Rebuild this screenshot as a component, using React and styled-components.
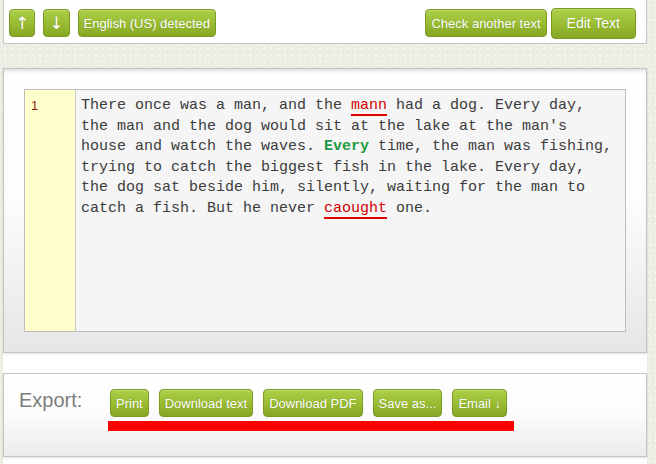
import React from "react";
import styled, { createGlobalStyle } from "styled-components";

const Global = createGlobalStyle`
  html, body { margin: 0; padding: 0; }
  body {
    background-color: #efeee6;
    background-image:
      radial-gradient(rgba(120,115,95,0.06) 1px, transparent 1px),
      radial-gradient(rgba(255,255,255,0.6) 1px, transparent 1px);
    background-size: 5px 5px, 7px 7px;
    background-position: 0 0, 2px 3px;
    font-family: "Liberation Sans", Arial, sans-serif;
    overflow: hidden;
  }
`;

const Page = styled.div`
  width: 644px;
  margin-left: 3px;
  display: flex;
  flex-direction: column;
`;

const TopBar = styled.div`
  box-sizing: border-box;
  height: 45px;
  margin-top: -1px;
  background: #fff;
  border: 1px solid #c6c6c6;
  display: flex;
  align-items: center;
  padding: 3px 10px 0 5px;
`;

const Group = styled.div`
  display: flex;
  align-items: center;
  gap: ${(p) => p.$gap}px;
`;

const Spacer = styled.div`
  flex: 1;
`;

const Button = styled.button`
  box-sizing: border-box;
  height: ${(p) => (p.$big ? 31 : 28)}px;
  padding: 0 ${(p) => (p.$big ? 15 : 5)}px;
  border: 1px solid #7c9a22;
  border-radius: 4px;
  background: linear-gradient(to bottom, #abcf47 0%, #98bb32 55%, #86a723 100%);
  color: #fff;
  font-family: ${(p) => (p.$arrow ? '"DejaVu Sans", sans-serif' : '"Liberation Sans", Arial, sans-serif')};
  font-size: ${(p) => (p.$big ? 14 : p.$arrow ? 17 : 13)}px;
  line-height: 1;
  white-space: nowrap;
  text-shadow: 0 0 1px rgba(60, 80, 0, 0.35);
  box-shadow: inset 0 1px 0 rgba(255, 255, 255, 0.25);
  cursor: pointer;
  display: flex;
  align-items: center;
  justify-content: center;
`;

const Lower = styled.div`
  background: #fff;
  margin-top: 24px;
  display: flex;
  flex-direction: column;
  gap: 20px;
  padding-bottom: 10px;
`;

const MainPanel = styled.div`
  box-sizing: border-box;
  height: 285px;
  border: 1px solid #c4c4c4;
  padding: 20px;
  background: linear-gradient(to bottom, #ffffff 0%, #fdfdfd 45%, #e6e6e6 100%);
  box-shadow: inset 0 4px 5px -3px rgba(0, 0, 0, 0.18), 0 1px 2px rgba(0, 0, 0, 0.12);
`;

const Editor = styled.div`
  box-sizing: border-box;
  height: 243px;
  border: 1px solid #bdbdbd;
  display: flex;
  background: #f5f5f5;
`;

const Gutter = styled.div`
  box-sizing: border-box;
  width: 51px;
  flex: none;
  background: #ffffcc;
  border-right: 1px solid #c8c8c8;
  padding: 6px 0 0 6px;
  font-family: "Liberation Sans", Arial, sans-serif;
  font-size: 13px;
  line-height: 20.6px;
  color: #8a1f1f;
`;

const TextArea = styled.div`
  flex: 1;
  padding: 6px 5px 0 5px;
  font-family: "Liberation Mono", "Courier New", monospace;
  font-size: 15px;
  line-height: 20.6px;
  color: #3c3c3c;
  white-space: pre;
`;

const Miss = styled.span`
  color: #d40000;
  border-bottom: 2px solid #e00000;
`;

const Style = styled.span`
  color: #1f9a42;
  font-weight: bold;
`;

const ExportPanel = styled.div`
  box-sizing: border-box;
  height: 84px;
  border: 1px solid #c4c4c4;
  background: linear-gradient(to bottom, #ffffff 0%, #fcfcfc 50%, #ebebeb 100%);
  box-shadow: 0 1px 2px rgba(0, 0, 0, 0.12);
  display: flex;
  align-items: flex-start;
  padding: 15px 0 0 15px;
`;

const ExportLabel = styled.div`
  width: 89px;
  flex: none;
  font-family: "Liberation Sans", Arial, sans-serif;
  font-size: 20px;
  line-height: 23px;
  color: #7d7d7d;
`;

const ExportCol = styled.div`
  display: flex;
  flex-direction: column;
  gap: 4px;
`;

const ExportRow = styled.div`
  display: flex;
  gap: 10px;
  padding-left: 2px;
`;

const RedBar = styled.div`
  width: 406px;
  height: 10px;
  background: #ff0000;
`;

export default function App() {
  return (
    <>
      <Global />
      <Page>
        <TopBar>
          <Group $gap={8}>
            <Button $arrow>↑</Button>
            <Button $arrow>↓</Button>
            <Button>English (US) detected</Button>
          </Group>
          <Spacer />
          <Group $gap={4}>
            <Button>Check another text</Button>
            <Button $big>Edit Text</Button>
          </Group>
        </TopBar>
        <Lower>
          <MainPanel>
            <Editor>
              <Gutter>1</Gutter>
              <TextArea>
                There once was a man, and the <Miss>mann</Miss> had a dog. Every day,
                {"\n"}the man and the dog would sit at the lake at the man's
                {"\n"}house and watch the waves. <Style>Every</Style> time, the man was fishing,
                {"\n"}trying to catch the biggest fish in the lake. Every day,
                {"\n"}the dog sat beside him, silently, waiting for the man to
                {"\n"}catch a fish. But he never <Miss>caought</Miss> one.
              </TextArea>
            </Editor>
          </MainPanel>
          <ExportPanel>
            <ExportLabel>Export:</ExportLabel>
            <ExportCol>
              <ExportRow>
                <Button>Print</Button>
                <Button>Download text</Button>
                <Button>Download PDF</Button>
                <Button>Save as...</Button>
                <Button>Email ↓</Button>
              </ExportRow>
              <RedBar />
            </ExportCol>
          </ExportPanel>
        </Lower>
      </Page>
    </>
  );
}
